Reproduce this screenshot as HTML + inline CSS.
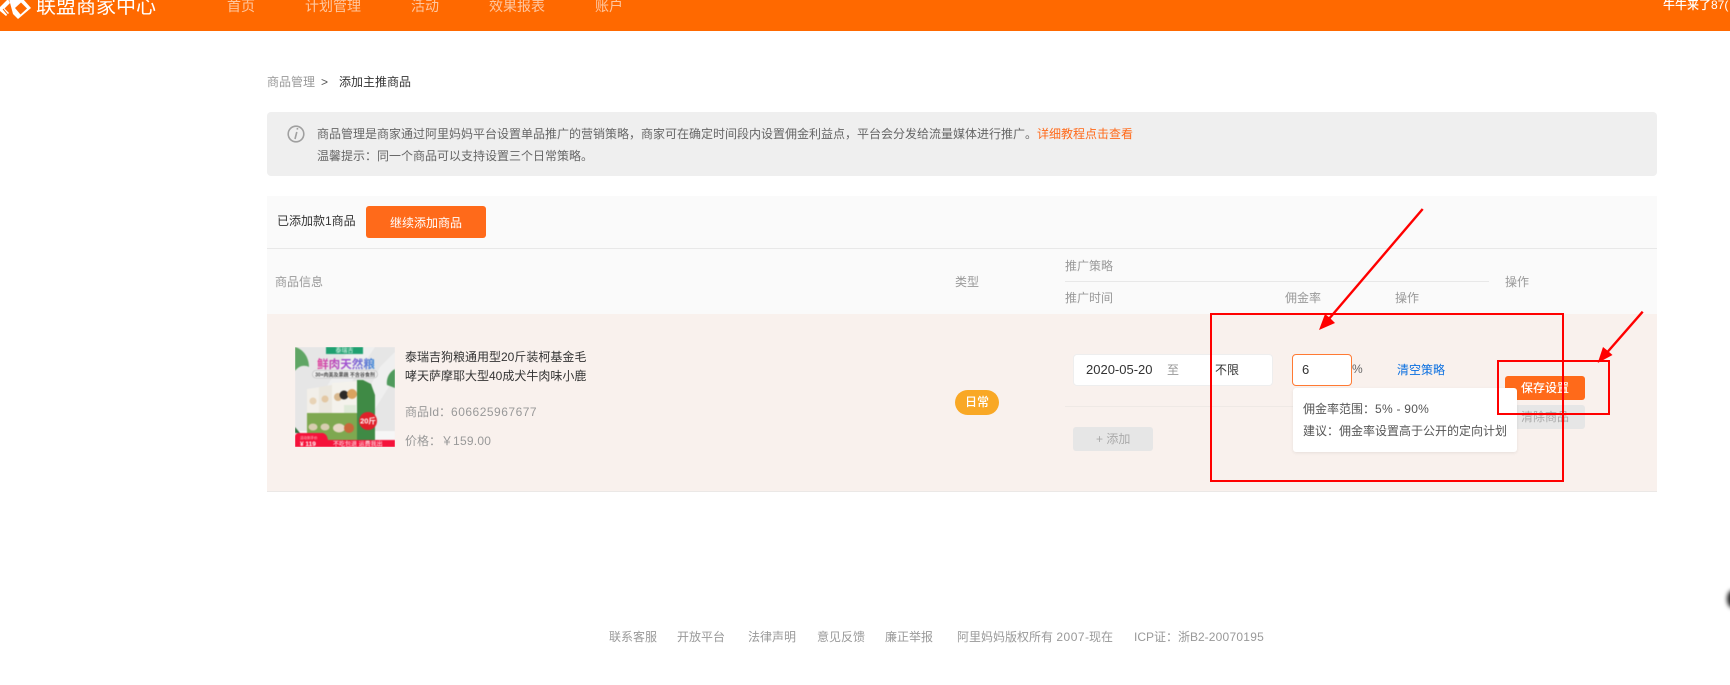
<!DOCTYPE html>
<html lang="zh">
<head>
<meta charset="utf-8">
<title>联盟商家中心</title>
<style>
*{margin:0;padding:0;box-sizing:border-box}
html,body{width:1730px;height:685px;overflow:hidden;background:#fff}
body{position:relative;font-family:"Liberation Sans","Noto Sans CJK SC",sans-serif;font-size:12px;color:#333}
.a{position:absolute}
.t{position:absolute;line-height:20px;height:20px;white-space:nowrap}
.g{color:#999}
.n{letter-spacing:.5px}
.f{letter-spacing:.25px}
.hd{left:0;top:0;width:1730px;height:31px;background:#ff6900}
.nav{position:absolute;top:-4px;font-size:14px;line-height:20px;color:rgba(255,255,255,.62);white-space:nowrap}
.btn{position:absolute;border-radius:3px;background:#ff6a1a}
.gb{position:absolute;border-radius:3px;background:#e6e6e6}
</style>
</head>
<body>
<div class="a hd"></div>
<svg class="a" style="left:0;top:0" width="32" height="20" viewBox="0 0 32 20">
<path d="M9 -1H23L31 8L18 19L13 14Z" fill="#fff"/>
<path d="M21 2.5L27 8.5L20.5 14.5L15 8Z" fill="#ff6900"/>
<path d="M8 -1L0 7V11L6 16L9 13L4.5 8.5L10 3Z" fill="#fff"/>
<path d="M3 9L8 15" stroke="#ff6900" stroke-width="1"/>
</svg>
<div class="t" style="left:36px;top:-4px;font-size:20px;line-height:22px;height:22px;color:#fff">联盟商家中心</div>
<div class="nav" style="left:227px">首页</div>
<div class="nav" style="left:305px">计划管理</div>
<div class="nav" style="left:411px">活动</div>
<div class="nav" style="left:489px">效果报表</div>
<div class="nav" style="left:595px">账户</div>
<div class="t" style="left:1663px;top:-5px;color:#fff;font-weight:500">牛牛来了87(</div>

<div class="t g" style="left:267px;top:72px">商品管理</div>
<div class="t" style="left:321px;top:72px;color:#555">&gt;</div>
<div class="t" style="left:339px;top:72px">添加主推商品</div>

<div class="a" style="left:267px;top:112px;width:1390px;height:64px;background:#efefef;border-radius:4px"></div>
<svg class="a" style="left:287px;top:125px" width="18" height="18" viewBox="0 0 18 18">
<circle cx="9" cy="9" r="7.8" fill="none" stroke="#a0a0a0" stroke-width="1.6"/>
<path d="M9.6 3.8h1.6M9.8 7L8 14" fill="none" stroke="#a0a0a0" stroke-width="1.6"/>
</svg>
<div class="t" style="left:317px;top:124px;color:#666">商品管理是商家通过阿里妈妈平台设置单品推广的营销策略，商家可在确定时间段内设置佣金利益点，平台会分发给流量媒体进行推广。<span style="color:#ff6a1a">详细教程点击查看</span></div>
<div class="t" style="left:317px;top:146px;color:#666">温馨提示：同一个商品可以支持设置三个日常策略。</div>

<div class="a" style="left:267px;top:196px;width:1390px;height:118px;background:#fafafa"></div>
<div class="a" style="left:267px;top:248px;width:1390px;height:1px;background:#e8e8e8"></div>
<div class="t" style="left:277px;top:211px">已添加款1商品</div>
<div class="btn" style="left:366px;top:206px;width:120px;height:32px"></div>
<div class="t" style="left:390px;top:213px;color:#fff">继续添加商品</div>

<div class="t g" style="left:275px;top:272px">商品信息</div>
<div class="t g" style="left:955px;top:272px">类型</div>
<div class="t g" style="left:1065px;top:256px">推广策略</div>
<div class="a" style="left:1065px;top:281px;width:424px;height:1px;background:#e8e8e8"></div>
<div class="t g" style="left:1065px;top:288px">推广时间</div>
<div class="t g" style="left:1285px;top:288px">佣金率</div>
<div class="t g" style="left:1395px;top:288px">操作</div>
<div class="t g" style="left:1505px;top:272px">操作</div>

<div class="a" style="left:267px;top:314px;width:1390px;height:178px;background:#f9f1ed;border-bottom:1px solid #ebe8e6"></div>

<svg class="a" style="left:295px;top:347px" width="100" height="100" viewBox="0 0 100 100">
<defs>
<linearGradient id="tg" x1="0" x2="1" y1="0" y2="0"><stop offset="0" stop-color="#e0409a"/><stop offset=".5" stop-color="#a04fd0"/><stop offset="1" stop-color="#3f8fd8"/></linearGradient>
</defs>
<g style="filter:blur(.55px)">
<rect width="100" height="100" fill="#e6e6e6"/>
<path d="M55 0H80L40 60H20ZM85 20L100 5V30L75 70H60Z" fill="#efefef"/>
<rect y="84" width="100" height="16" fill="#f6f6f6"/>
<path d="M0 0C8 2 14 10 14 20C8 17 3 20 0 24Z" fill="#5fa564"/>
<path d="M100 22C94 25 91 32 92 38L100 41Z" fill="#4f9a5c"/>
<path d="M0 80L5 86H0Z" fill="#2f6f3f"/>
<rect x="31" y="0" width="37" height="7" fill="#1fa070"/>
<text x="49.5" y="5.6" font-size="6" fill="#e9fff5" text-anchor="middle">泰瑞吉</text>
<text x="51" y="21" font-size="11.6" font-weight="bold" fill="url(#tg)" text-anchor="middle">鲜肉天然粮</text>
<rect x="17.5" y="23.5" width="65" height="7.5" rx="3.7" fill="#f0f0f0" stroke="#b5b5b5" stroke-width=".6"/>
<text x="50" y="29.3" font-size="5" font-weight="bold" fill="#444" text-anchor="middle">30+肉美及果蔬 不含谷食剂</text>
<path d="M12 42L25 40V95H12Z" fill="#f2efe9"/>
<path d="M24 40L37 38V95H24Z" fill="#ebe7de"/>
<path d="M37 36L62 34V95H37Z" fill="#f4f2ec"/>
<path d="M62 33L68 33L76 37L80 48V95H62Z" fill="#3f8a45"/>
<rect x="12" y="66" width="50" height="29" fill="#7ea850"/>
<circle cx="18" cy="54" r="3.5" fill="#e8d3b6"/><circle cx="30" cy="52" r="3.5" fill="#e3c8a4"/>
<circle cx="43" cy="50" r="4" fill="#d8b88e"/><circle cx="49" cy="48" r="4.5" fill="#2c2a28"/><circle cx="57" cy="47" r="5" fill="#d9a35f"/>
<rect x="49" y="58" width="12" height="8" fill="#dfead9"/>
<ellipse cx="18" cy="80" rx="4.5" ry="3.5" fill="#d7cdb0"/><ellipse cx="30" cy="80" rx="4.5" ry="3.5" fill="#d7cdb0"/>
<ellipse cx="44" cy="81" rx="6" ry="4.5" fill="#e6d8c4"/><ellipse cx="54" cy="81" rx="5" ry="5" fill="#c9673a"/>
<circle cx="73" cy="74" r="9" fill="#e0202a"/>
<text x="73" y="76.5" font-size="7.5" font-weight="bold" fill="#fff" text-anchor="middle">20斤</text>
<rect x="30" y="93" width="70" height="7" fill="#f5123a"/>
<path d="M0 90Q0 86 4 86H28Q32 87 33 93V100H0Z" fill="#f5123a"/>
<text x="5" y="92" font-size="3.5" fill="#ffd0d0">活动到手价</text>
<text x="5" y="99" font-size="6.5" font-weight="bold" fill="#fff">¥ 119</text>
<text x="38" y="99" font-size="6" fill="#fff">不吃包退 运费我出</text>
</g>
</svg>

<div class="t" style="left:405px;top:347px">泰瑞吉狗粮通用型20斤装柯基金毛</div>
<div class="t" style="left:405px;top:366px">哮天萨摩耶大型40成犬牛肉味小鹿</div>
<div class="t g" style="left:405px;top:402px">商品Id：<span class="n">606625967677</span></div>
<div class="t g" style="left:405px;top:431px">价格：￥<span class="f">159.00</span></div>

<div class="a" style="left:955px;top:390px;width:44px;height:25px;border-radius:13px;background:#f9a825"></div>
<div class="t" style="left:965px;top:392px;color:#fff;font-weight:500">日常</div>

<div class="a" style="left:1073px;top:354px;width:200px;height:32px;background:#fff;border:1px solid #eee;border-radius:4px"></div>
<div class="t" style="left:1086px;top:360px;font-size:13px">2020-05-20</div>
<div class="t g" style="left:1167px;top:360px">至</div>
<div class="t" style="left:1215px;top:360px">不限</div>
<div class="a" style="left:1292px;top:354px;width:60px;height:32px;background:#fff;border:1px solid #ff7a33;border-radius:4px"></div>
<div class="t" style="left:1302px;top:360px;font-size:13px">6</div>
<div class="t" style="left:1352px;top:359px;color:#666">%</div>
<div class="t" style="left:1397px;top:360px;color:#0a6fe0">清空策略</div>

<div class="a" style="left:1065px;top:406px;width:424px;height:1px;background:#efe9e5"></div>
<div class="gb" style="left:1073px;top:427px;width:80px;height:24px"></div>
<div class="t" style="left:1096px;top:429px;color:#aaa">+ 添加</div>

<div class="btn" style="left:1505px;top:376px;width:80px;height:24px"></div>
<div class="t" style="left:1521px;top:378px;color:#fff;font-weight:500">保存设置</div>
<div class="gb" style="left:1505px;top:405px;width:80px;height:24px"></div>
<div class="t" style="left:1521px;top:407px;color:#aaa">清除商品</div>

<div class="a" style="left:1293px;top:388px;width:224px;height:64px;background:#fff;border-radius:3px;box-shadow:0 1px 3px rgba(0,0,0,.08)"></div>
<div class="t" style="left:1303px;top:399px;color:#555">佣金率范围：<span class="f">5% - 90%</span></div>
<div class="t" style="left:1303px;top:421px;color:#555">建议：佣金率设置高于公开的定向计划</div>

<svg class="a" style="left:0;top:0" width="1730" height="685" viewBox="0 0 1730 685" fill="none">
<rect x="1211" y="314" width="352" height="167" stroke="#ff0000" stroke-width="2"/>
<rect x="1498" y="361" width="111" height="53" stroke="#ff0000" stroke-width="2"/>
<path d="M1422.7 209L1328 320" stroke="#ff0000" stroke-width="2.4"/>
<path d="M1319 330L1335 323L1330 318L1325 314Z" fill="#ff0000"/>
<path d="M1642.7 311.7L1604 356" stroke="#ff0000" stroke-width="2.4"/>
<path d="M1597.7 363L1612.5 355L1608 351L1603 347Z" fill="#ff0000"/>
</svg>

<div class="t g" style="left:609px;top:627px">联系客服</div>
<div class="t g" style="left:677px;top:627px">开放平台</div>
<div class="t g" style="left:748px;top:627px">法律声明</div>
<div class="t g" style="left:817px;top:627px">意见反馈</div>
<div class="t g" style="left:885px;top:627px">廉正举报</div>
<div class="t g" style="left:957px;top:627px">阿里妈妈版权所有 <span class="n">2007</span>-现在</div>
<div class="t g" style="left:1134px;top:627px">ICP证：浙B2-<span class="f">20070195</span></div>

<div class="a" style="left:1727px;top:590px;width:12px;height:18px;border-radius:50%;background:#222;filter:blur(2px)"></div>
</body>
</html>
